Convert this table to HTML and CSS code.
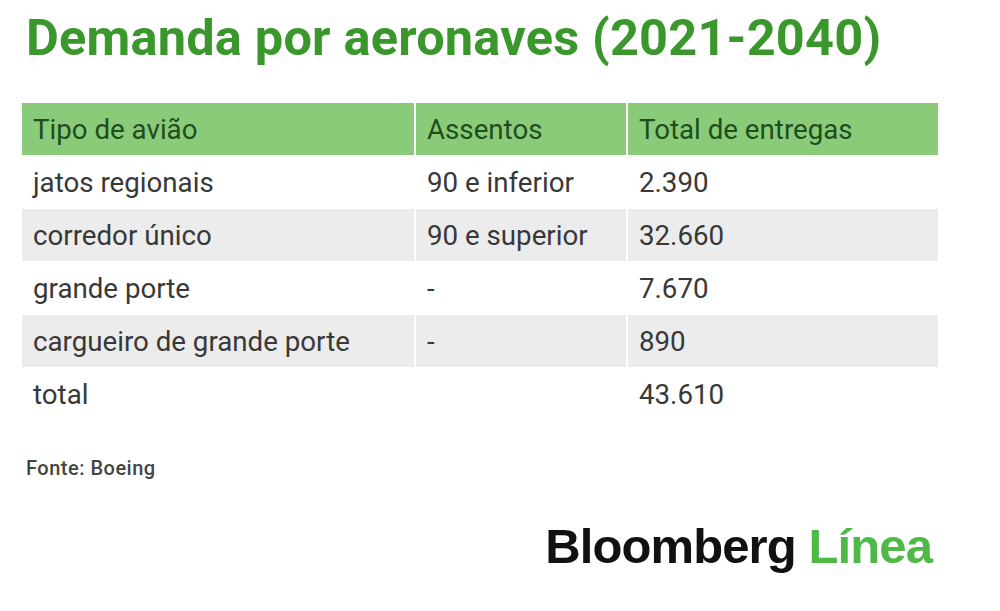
FILE: index.html
```html
<!DOCTYPE html>
<html lang="pt">
<head>
<meta charset="utf-8">
<link rel="stylesheet" href="styles.css">
</head>
<body>
<div class="page">
  <h1 class="title">Demanda por aeronaves (2021-2040)</h1>
  <div class="table">
    <div class="row head">
      <div class="cell c1">Tipo de avião</div>
      <div class="cell c2">Assentos</div>
      <div class="cell c3">Total de entregas</div>
    </div>
    <div class="row">
      <div class="cell c1">jatos regionais</div>
      <div class="cell c2">90 e inferior</div>
      <div class="cell c3">2.390</div>
    </div>
    <div class="row alt">
      <div class="cell c1">corredor único</div>
      <div class="cell c2">90 e superior</div>
      <div class="cell c3">32.660</div>
    </div>
    <div class="row">
      <div class="cell c1">grande porte</div>
      <div class="cell c2">-</div>
      <div class="cell c3">7.670</div>
    </div>
    <div class="row alt">
      <div class="cell c1">cargueiro de grande porte</div>
      <div class="cell c2">-</div>
      <div class="cell c3">890</div>
    </div>
    <div class="row">
      <div class="cell c1">total</div>
      <div class="cell c2"></div>
      <div class="cell c3">43.610</div>
    </div>
  </div>
  <div class="source">Fonte: Boeing</div>
  <div class="logo"><span class="bb">Bloomberg</span> <span class="linea">Línea</span></div>
</div>
</body>
</html>
```

FILE: styles.css
```css
html, body {
  margin: 0;
  padding: 0;
  background: #ffffff;
}
.page {
  width: 1000px;
  height: 611px;
  box-sizing: border-box;
  padding: 10px 62px 0 22px;
  font-family: Roboto, "Liberation Sans", sans-serif;
  display: flex;
  flex-direction: column;
}
.title {
  margin: 0 0 0 4px;
  font-size: 50.5px;
  font-weight: 700;
  color: #3a972b;
  line-height: 56px;
  letter-spacing: 0.2px;
}
.table {
  margin-top: 37px;
  display: flex;
  flex-direction: column;
  gap: 1px;
}
.row {
  display: grid;
  grid-template-columns: 392px 210px 1fr;
  column-gap: 2px;
  height: 52px;
}
.cell {
  display: flex;
  align-items: center;
  padding-left: 11px;
  font-size: 27.7px;
  color: #383838;
}
.row.head .cell {
  background: #8acb79;
  color: #1f4d1c;
}
.row.alt .cell {
  background: #ececec;
}
.source {
  margin-top: 36px;
  margin-left: 4px;
  font-size: 20px;
  line-height: 24px;
  font-weight: 500;
  letter-spacing: 0.5px;
  color: #444;
}
.logo {
  margin-top: 41px;
  align-self: flex-end;
  margin-right: 6px;
  font-family: "Liberation Sans", Arial, sans-serif;
  font-weight: 700;
  font-size: 49px;
  letter-spacing: -0.9px;
  line-height: 50px;
}
.bb { color: #111; }
.linea { color: #4fb947; }
```
